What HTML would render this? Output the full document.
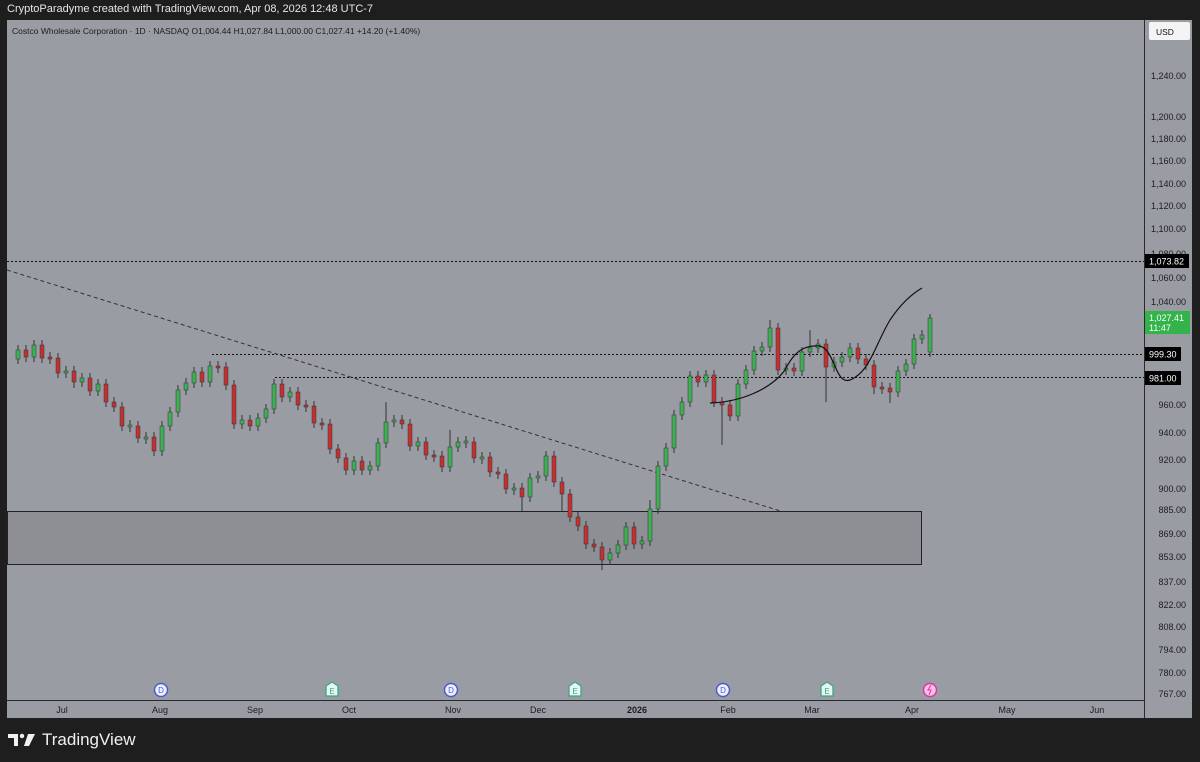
<!DOCTYPE html>
<html><head><meta charset="utf-8"><style>
body{margin:0;width:1200px;height:762px;background:#1e1e1f;overflow:hidden;font-family:"Liberation Sans",sans-serif;position:relative}
.hdr{position:absolute;left:7px;top:3px;color:#e6e6e6;font-size:11px}
.tv{position:absolute;left:8px;top:730px;color:#f0f0f0;font-size:17px;display:flex;align-items:center;gap:6px}
svg text{font-family:"Liberation Sans",sans-serif}
.g{fill:#3fae55;stroke:#333;stroke-width:.5}
.r{fill:#c23232;stroke:#333;stroke-width:.5}
.ax{font-size:9px;fill:#1c1c20}
</style></head><body>
<div class="hdr">CryptoParadyme created with TradingView.com, Apr 08, 2026 12:48 UTC-7</div>
<svg xmlns="http://www.w3.org/2000/svg" width="1200" height="762" style="position:absolute;left:0;top:0">
<rect x="7" y="20" width="1185" height="698" fill="#9a9ca4"/>
<line x1="1144.5" y1="20" x2="1144.5" y2="718" stroke="#2a2a2e"/>
<line x1="7" y1="700.5" x2="1144" y2="700.5" stroke="#2a2a2e"/>
<text x="12" y="34" font-size="8.5" fill="#1c1c20">Costco Wholesale Corporation · 1D · NASDAQ  O1,004.44  H1,027.84  L1,000.00  C1,027.41  +14.20 (+1.40%)</text>
<rect x="1149" y="22" width="41" height="18" rx="2" fill="#f4f4f4"/><text x="1156" y="35" font-size="8.5" fill="#111">USD</text>
<g class="ax" text-anchor="end">
<text x="1186" y="79">1,240.00</text><text x="1186" y="120">1,200.00</text><text x="1186" y="142">1,180.00</text><text x="1186" y="164">1,160.00</text><text x="1186" y="187">1,140.00</text><text x="1186" y="209">1,120.00</text><text x="1186" y="232">1,100.00</text><text x="1186" y="257">1,080.00</text><text x="1186" y="281">1,060.00</text><text x="1186" y="305">1,040.00</text><text x="1186" y="408">960.00</text><text x="1186" y="436">940.00</text><text x="1186" y="463">920.00</text><text x="1186" y="492">900.00</text><text x="1186" y="513">885.00</text><text x="1186" y="537">869.00</text><text x="1186" y="560">853.00</text><text x="1186" y="585">837.00</text><text x="1186" y="608">822.00</text><text x="1186" y="630">808.00</text><text x="1186" y="653">794.00</text><text x="1186" y="676">780.00</text><text x="1186" y="697">767.00</text>
</g>
<line x1="7" y1="261.5" x2="1144" y2="261.5" stroke="#111" stroke-dasharray="2,2"/>
<line x1="212" y1="354.5" x2="1144" y2="354.5" stroke="#111" stroke-dasharray="2,2"/>
<line x1="275" y1="377.5" x2="1144" y2="377.5" stroke="#111" stroke-dasharray="2,2"/>
<line x1="7" y1="270" x2="790" y2="514" stroke="#333" stroke-dasharray="4,3"/>
<rect x="7.5" y="511.5" width="914" height="53" fill="#8d8f95" stroke="#222"/>
<rect x="1145" y="254" width="44" height="14" fill="#000"/><text x="1149" y="264.5" font-size="9" fill="#fff">1,073.82</text>
<rect x="1145" y="347" width="36" height="14" fill="#000"/><text x="1149" y="357.5" font-size="9" fill="#fff">999.30</text>
<rect x="1145" y="371" width="36" height="14" fill="#000"/><text x="1149" y="381.5" font-size="9" fill="#fff">981.00</text>
<rect x="1145" y="311" width="45" height="23" fill="#32b44a"/><text x="1149" y="321" font-size="9" fill="#fff">1,027.41</text><text x="1149" y="331" font-size="9" fill="#fff">11:47</text>
<path stroke="#333" fill="none" d="M18 345V364M26 345V362M34 340V362M42 340V363M50 352V364M58 353V378M66 366V378M74 366V388M82 373V387M90 373V396M98 379V396M106 379V407M114 397V412M122 402V431M130 420V432M138 421V443M146 432V444M154 432V456M162 421V456M170 407V431M178 385V417M186 378V395M194 367V388M202 367V387M210 361V387M218 361V373M226 362V390M234 380V429M242 415V429M250 415V431M258 413V431M266 404V423M274 379V414M282 379V402M290 387V402M298 387V410M306 400V412M314 401V428M322 418V430M330 419V454M338 444V463M346 453V475M354 456V475M362 456V475M370 461V475M378 438V471M386 402V448M394 415V427M402 415V429M410 419V451M418 437V451M426 437V460M434 450V462M442 451V472M450 430V472M458 437V452M466 436V448M474 437V463M482 452V464M490 452V477M498 467V479M506 469V494M514 483V495M522 483V511M530 473V502M538 471V483M546 451V481M554 451V487M562 477V511M570 489V522M578 512V531M586 521V549M594 539V552M602 542V570M610 548V565M618 540V558M626 522V550M634 522V549M642 536V549M650 500V546M658 461V514M666 443V471M674 410V453M682 397V420M690 371V407M698 371V387M706 370V387M714 370V407M722 397V445M730 400V421M738 379V421M746 365V389M754 346V375M762 342V356M770 320V352M778 323V375M786 363V375M794 363V376M802 347V376M810 330V357M818 339V353M826 339V402M834 357V372M842 352V367M850 343V362M858 343V364M866 354V370M874 360V394M882 382V394M890 383V403M898 366V397M906 359V376M914 334V369M922 330V344M930 314V357"/>
<g class="g"><rect x="16" y="350" width="4" height="9"/><rect x="32" y="345" width="4" height="12"/><rect x="64" y="371" width="4" height="2"/><rect x="80" y="378" width="4" height="4"/><rect x="96" y="384" width="4" height="7"/><rect x="128" y="425" width="4" height="2"/><rect x="144" y="437" width="4" height="2"/><rect x="160" y="426" width="4" height="25"/><rect x="168" y="412" width="4" height="14"/><rect x="176" y="390" width="4" height="22"/><rect x="184" y="383" width="4" height="7"/><rect x="192" y="372" width="4" height="11"/><rect x="208" y="366" width="4" height="16"/><rect x="240" y="420" width="4" height="4"/><rect x="256" y="418" width="4" height="8"/><rect x="264" y="409" width="4" height="9"/><rect x="272" y="384" width="4" height="25"/><rect x="288" y="392" width="4" height="5"/><rect x="352" y="461" width="4" height="9"/><rect x="368" y="466" width="4" height="4"/><rect x="376" y="443" width="4" height="23"/><rect x="384" y="422" width="4" height="21"/><rect x="392" y="420" width="4" height="2"/><rect x="416" y="442" width="4" height="4"/><rect x="448" y="447" width="4" height="20"/><rect x="456" y="442" width="4" height="5"/><rect x="464" y="441" width="4" height="2"/><rect x="480" y="457" width="4" height="2"/><rect x="512" y="488" width="4" height="2"/><rect x="528" y="478" width="4" height="19"/><rect x="536" y="476" width="4" height="2"/><rect x="544" y="456" width="4" height="20"/><rect x="608" y="553" width="4" height="7"/><rect x="616" y="545" width="4" height="8"/><rect x="624" y="527" width="4" height="18"/><rect x="640" y="541" width="4" height="3"/><rect x="648" y="509" width="4" height="32"/><rect x="656" y="466" width="4" height="43"/><rect x="664" y="448" width="4" height="18"/><rect x="672" y="415" width="4" height="33"/><rect x="680" y="402" width="4" height="13"/><rect x="688" y="376" width="4" height="26"/><rect x="704" y="375" width="4" height="7"/><rect x="736" y="384" width="4" height="32"/><rect x="744" y="370" width="4" height="14"/><rect x="752" y="351" width="4" height="19"/><rect x="760" y="347" width="4" height="4"/><rect x="768" y="328" width="4" height="19"/><rect x="784" y="368" width="4" height="2"/><rect x="800" y="352" width="4" height="19"/><rect x="808" y="348" width="4" height="4"/><rect x="816" y="344" width="4" height="4"/><rect x="832" y="362" width="4" height="5"/><rect x="840" y="357" width="4" height="5"/><rect x="848" y="348" width="4" height="9"/><rect x="896" y="371" width="4" height="21"/><rect x="904" y="364" width="4" height="7"/><rect x="912" y="339" width="4" height="25"/><rect x="920" y="335" width="4" height="4"/><rect x="928" y="318" width="4" height="34"/></g>
<g class="r"><rect x="24" y="350" width="4" height="7"/><rect x="40" y="345" width="4" height="13"/><rect x="48" y="357" width="4" height="2"/><rect x="56" y="358" width="4" height="15"/><rect x="72" y="371" width="4" height="11"/><rect x="88" y="378" width="4" height="13"/><rect x="104" y="384" width="4" height="18"/><rect x="112" y="402" width="4" height="5"/><rect x="120" y="407" width="4" height="19"/><rect x="136" y="426" width="4" height="12"/><rect x="152" y="437" width="4" height="14"/><rect x="200" y="372" width="4" height="10"/><rect x="216" y="366" width="4" height="2"/><rect x="224" y="367" width="4" height="18"/><rect x="232" y="385" width="4" height="39"/><rect x="248" y="420" width="4" height="6"/><rect x="280" y="384" width="4" height="13"/><rect x="296" y="392" width="4" height="13"/><rect x="304" y="405" width="4" height="2"/><rect x="312" y="406" width="4" height="17"/><rect x="320" y="423" width="4" height="2"/><rect x="328" y="424" width="4" height="25"/><rect x="336" y="449" width="4" height="9"/><rect x="344" y="458" width="4" height="12"/><rect x="360" y="461" width="4" height="9"/><rect x="400" y="420" width="4" height="4"/><rect x="408" y="424" width="4" height="22"/><rect x="424" y="442" width="4" height="13"/><rect x="432" y="455" width="4" height="2"/><rect x="440" y="456" width="4" height="11"/><rect x="472" y="442" width="4" height="16"/><rect x="488" y="457" width="4" height="15"/><rect x="496" y="472" width="4" height="2"/><rect x="504" y="474" width="4" height="15"/><rect x="520" y="488" width="4" height="9"/><rect x="552" y="456" width="4" height="26"/><rect x="560" y="482" width="4" height="12"/><rect x="568" y="494" width="4" height="23"/><rect x="576" y="517" width="4" height="9"/><rect x="584" y="526" width="4" height="18"/><rect x="592" y="544" width="4" height="3"/><rect x="600" y="547" width="4" height="13"/><rect x="632" y="527" width="4" height="17"/><rect x="696" y="376" width="4" height="6"/><rect x="712" y="375" width="4" height="27"/><rect x="720" y="402" width="4" height="3"/><rect x="728" y="405" width="4" height="11"/><rect x="776" y="328" width="4" height="42"/><rect x="792" y="368" width="4" height="3"/><rect x="824" y="344" width="4" height="23"/><rect x="856" y="348" width="4" height="11"/><rect x="864" y="359" width="4" height="6"/><rect x="872" y="365" width="4" height="22"/><rect x="880" y="387" width="4" height="2"/><rect x="888" y="388" width="4" height="4"/></g>
<path d="M710 403 C740 402 770 390 785 370 C795 350 805 345 820 346 C835 350 835 385 850 380 C870 372 875 345 890 320 C900 305 910 295 922 288" fill="none" stroke="#111" stroke-width="1.2"/>
<g font-size="8" text-anchor="middle">
<circle cx="161" cy="690" r="6.5" fill="#eef" stroke="#4a5bd0" stroke-width="1.5"/><text x="161" y="693" fill="#4a5bd0">D</text>
<circle cx="451" cy="690" r="6.5" fill="#eef" stroke="#4a5bd0" stroke-width="1.5"/><text x="451" y="693" fill="#4a5bd0">D</text>
<circle cx="723" cy="690" r="6.5" fill="#eef" stroke="#4a5bd0" stroke-width="1.5"/><text x="723" y="693" fill="#4a5bd0">D</text>
<path d="M326 686l6-4 6 4v10h-12z" fill="#e8f6f0" stroke="#3aa58a" stroke-width="1.3"/><text x="332" y="694" fill="#3aa58a">E</text>
<path d="M569 686l6-4 6 4v10h-12z" fill="#e8f6f0" stroke="#3aa58a" stroke-width="1.3"/><text x="575" y="694" fill="#3aa58a">E</text>
<path d="M821 686l6-4 6 4v10h-12z" fill="#e8f6f0" stroke="#3aa58a" stroke-width="1.3"/><text x="827" y="694" fill="#3aa58a">E</text>
<circle cx="930" cy="690" r="6.5" fill="#fbe" stroke="#d0409a" stroke-width="1.5"/><path d="M931 685l-3 5h3l-2 5" stroke="#d0409a" fill="none"/>
</g>
<g class="ax" text-anchor="middle">
<text x="62" y="713">Jul</text><text x="160" y="713">Aug</text><text x="255" y="713">Sep</text><text x="349" y="713">Oct</text><text x="453" y="713">Nov</text><text x="538" y="713">Dec</text><text x="637" y="713" font-weight="bold">2026</text><text x="728" y="713">Feb</text><text x="812" y="713">Mar</text><text x="912" y="713">Apr</text><text x="1007" y="713">May</text><text x="1097" y="713">Jun</text>
</g>
</svg>
<div class="tv"><svg width="28" height="16" viewBox="0 0 28 16"><path d="M0 2h10v12H6V6H0z" fill="#f0f0f0"/><circle cx="14" cy="4" r="2.2" fill="#f0f0f0"/><path d="M20 2h7l-6 12h-5z" fill="#f0f0f0"/></svg><span>TradingView</span></div>
</body></html>
